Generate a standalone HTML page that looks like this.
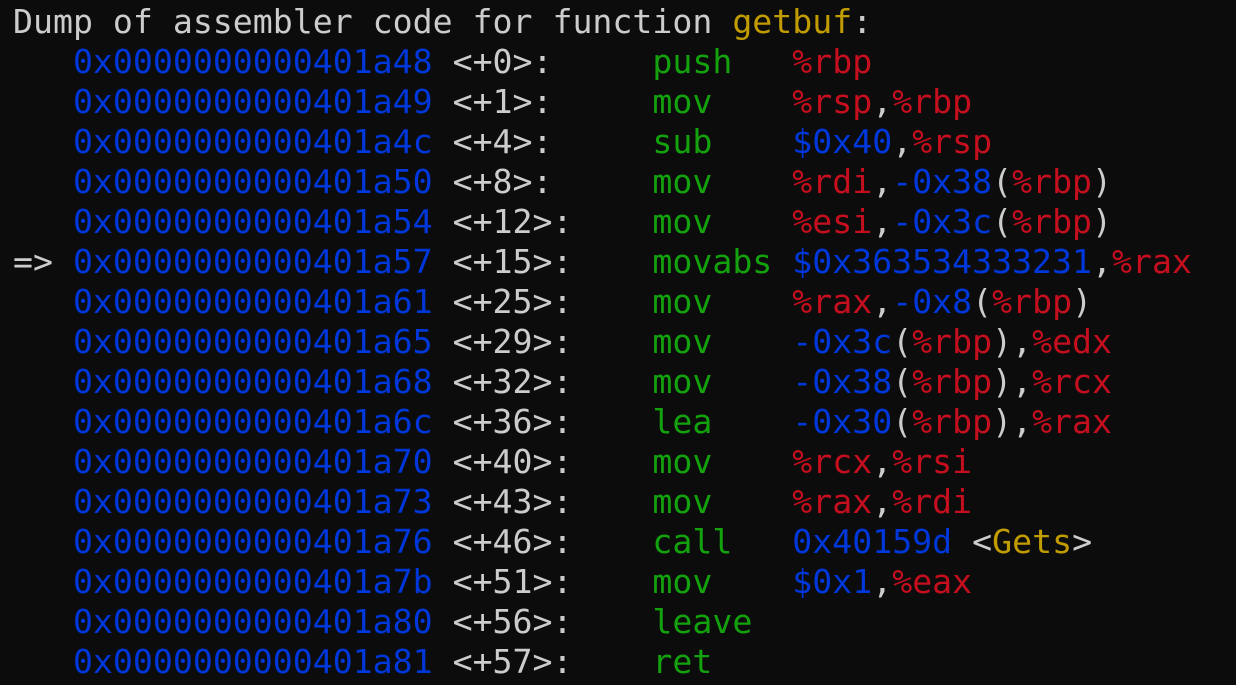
<!DOCTYPE html>
<html><head><style>
html,body{margin:0;padding:0;background:#0c0c0c;width:1236px;height:685px;overflow:hidden}
pre{margin:0;position:absolute;left:13px;top:2px;font-family:"DejaVu Sans Mono","Liberation Mono",monospace;font-size:33.2px;line-height:40px;color:#cccccc;letter-spacing:0}
.b{color:#0037da}.g{color:#13a10e}.r{color:#c50f1f}.y{color:#c19c00}
</style></head><body>
<pre>Dump of assembler code for function <span class="y">getbuf</span>:
   <span class="b">0x0000000000401a48</span> &lt;+0&gt;:     <span class="g">push</span>   <span class="r">%rbp</span>
   <span class="b">0x0000000000401a49</span> &lt;+1&gt;:     <span class="g">mov</span>    <span class="r">%rsp</span>,<span class="r">%rbp</span>
   <span class="b">0x0000000000401a4c</span> &lt;+4&gt;:     <span class="g">sub</span>    <span class="b">$0x40</span>,<span class="r">%rsp</span>
   <span class="b">0x0000000000401a50</span> &lt;+8&gt;:     <span class="g">mov</span>    <span class="r">%rdi</span>,<span class="b">-0x38</span>(<span class="r">%rbp</span>)
   <span class="b">0x0000000000401a54</span> &lt;+12&gt;:    <span class="g">mov</span>    <span class="r">%esi</span>,<span class="b">-0x3c</span>(<span class="r">%rbp</span>)
=&gt; <span class="b">0x0000000000401a57</span> &lt;+15&gt;:    <span class="g">movabs</span> <span class="b">$0x363534333231</span>,<span class="r">%rax</span>
   <span class="b">0x0000000000401a61</span> &lt;+25&gt;:    <span class="g">mov</span>    <span class="r">%rax</span>,<span class="b">-0x8</span>(<span class="r">%rbp</span>)
   <span class="b">0x0000000000401a65</span> &lt;+29&gt;:    <span class="g">mov</span>    <span class="b">-0x3c</span>(<span class="r">%rbp</span>),<span class="r">%edx</span>
   <span class="b">0x0000000000401a68</span> &lt;+32&gt;:    <span class="g">mov</span>    <span class="b">-0x38</span>(<span class="r">%rbp</span>),<span class="r">%rcx</span>
   <span class="b">0x0000000000401a6c</span> &lt;+36&gt;:    <span class="g">lea</span>    <span class="b">-0x30</span>(<span class="r">%rbp</span>),<span class="r">%rax</span>
   <span class="b">0x0000000000401a70</span> &lt;+40&gt;:    <span class="g">mov</span>    <span class="r">%rcx</span>,<span class="r">%rsi</span>
   <span class="b">0x0000000000401a73</span> &lt;+43&gt;:    <span class="g">mov</span>    <span class="r">%rax</span>,<span class="r">%rdi</span>
   <span class="b">0x0000000000401a76</span> &lt;+46&gt;:    <span class="g">call</span>   <span class="b">0x40159d</span> &lt;<span class="y">Gets</span>&gt;
   <span class="b">0x0000000000401a7b</span> &lt;+51&gt;:    <span class="g">mov</span>    <span class="b">$0x1</span>,<span class="r">%eax</span>
   <span class="b">0x0000000000401a80</span> &lt;+56&gt;:    <span class="g">leave</span>
   <span class="b">0x0000000000401a81</span> &lt;+57&gt;:    <span class="g">ret</span></pre>
</body></html>
